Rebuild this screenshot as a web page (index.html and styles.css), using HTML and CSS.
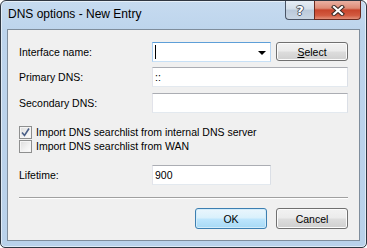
FILE: index.html
```html
<!DOCTYPE html>
<html lang="en">
<head>
    <meta charset="UTF-8">
    <title>DNS options - New Entry</title>
    <link rel="stylesheet" href="styles.css">
</head>
<body>
    <div class="window">
        <div class="titlebar">
            <span class="title">DNS options - New Entry</span>
            <div class="caption-buttons">
                <div class="cap-btn help">?</div>
                <div class="cap-btn close">
                    <svg width="14" height="11" viewBox="0 0 14 11">
                        <path d="M3 2 L11 9 M11 2 L3 9" stroke="#3a2a26" stroke-width="4.2" stroke-linecap="square"/>
                        <path d="M3 2 L11 9 M11 2 L3 9" stroke="#fff" stroke-width="2.2" stroke-linecap="square"/>
                    </svg>
                </div>
            </div>
        </div>

        <div class="client">
            <div class="row r1">
                <label class="label">Interface name:</label>
                <div class="combo focus">
                    <span class="caret"></span>
                    <span class="arrow"></span>
                </div>
                <button class="btn select"><u>S</u>elect</button>
            </div>
            <div class="row r2">
                <label class="label">Primary DNS:</label>
                <div class="input wide">::</div>
            </div>
            <div class="row r3">
                <label class="label">Secondary DNS:</label>
                <div class="input wide"></div>
            </div>

            <div class="check c1">
                <span class="box">
                    <svg width="9" height="9" viewBox="0 0 9 9">
                        <path d="M1 4.5 L3.5 7.5 L8 0.5" fill="none" stroke="#4a5f87" stroke-width="1.6"/>
                    </svg>
                </span>
                <span>Import DNS searchlist from internal DNS server</span>
            </div>
            <div class="check">
                <span class="box"></span>
                <span>Import DNS searchlist from WAN</span>
            </div>

            <div class="row r4">
                <label class="label">Lifetime:</label>
                <div class="input short">900</div>
            </div>

            <div class="separator"></div>

            <div class="buttons">
                <button class="btn default">OK</button>
                <button class="btn">Cancel</button>
            </div>
        </div>
    </div>
</body>
</html>
```

FILE: styles.css
```css
html, body { margin: 0; padding: 0; background: #fff; }
body { width: 367px; height: 248px; font-family: "Liberation Sans", Arial, sans-serif; }

.window {
    box-sizing: border-box;
    width: 367px; height: 248px;
    border: 1px solid #2f3742;
    border-radius: 6px 6px 5px 5px;
    background: linear-gradient(to bottom, #c6dbf0 0px, #bdd4ec 30px, #b9d1ea 100%);
    box-shadow: inset 0 0 0 1px rgba(255, 255, 255, 0.55);
    display: flex; flex-direction: column;
}

.titlebar { height: 28px; display: flex; align-items: flex-start; }
.title { font-size: 12px; line-height: 15px; padding: 6px 0 0 7px; color: #000; }
.caption-buttons { margin-left: auto; margin-right: 5px; display: flex; }
.cap-btn {
    box-sizing: border-box; height: 19px;
    display: flex; align-items: center; justify-content: center;
    border: 1px solid #4a5566; border-top: none;
}
.help {
    width: 29px; border-right: none; border-radius: 0 0 0 4px;
    background: linear-gradient(to bottom, #e6edf5 0%, #d3dee9 45%, #bac9da 50%, #c9d6e4 100%);
    color: #fff; font-weight: bold; font-size: 13px; font-family: "DejaVu Sans", sans-serif;
    text-shadow: 1px 0 0 #4b5563, -1px 0 0 #4b5563, 0 1px 0 #4b5563, 0 -1px 0 #4b5563;
}
.close {
    width: 47px; border-color: #6b2a1f; border-radius: 0 0 4px 0;
    background: linear-gradient(to bottom, #eab1a3 0%, #de8b76 40%, #c8452c 50%, #d25a40 80%, #e2907a 100%);
}

.client {
    flex: 1;
    margin: 0 6px 6px 6px;
    border: 1px solid #7f8d9c;
    background: #f0f0f0;
    padding: 12px 11px 0 11px;
    font-size: 10.5px;
    color: #000;
}

.row { display: flex; align-items: center; height: 20px; }
.r2 { margin-top: 5px; }
.r3 { margin-top: 6px; }
.r4 { margin-top: 12px; }
.label { width: 133px; flex: none; }

.input, .combo {
    box-sizing: border-box; height: 20px; background: #fff;
    border: 1px solid; border-color: #abadb3 #dbdfe6 #e3e9ef #e2e3ea;
    padding: 0 2px; line-height: 18px; font-size: 10.5px;
}
.wide { width: 197px; }
.short { width: 119px; }

.combo { width: 119px; position: relative; }
.combo.focus { border-color: #5e9fd8 #b7d6f3 #c7e0f6 #a9cdef; }
.caret { position: absolute; left: 2px; top: 2px; width: 1px; height: 14px; background: #000; }
.arrow {
    position: absolute; right: 4px; top: 8px;
    border-left: 4px solid transparent; border-right: 4px solid transparent; border-top: 4px solid #000;
}

.btn {
    box-sizing: border-box; font-family: inherit; font-size: 10.5px; color: #000;
    border: 1px solid #707070; border-radius: 3px; padding: 0;
    background: linear-gradient(to bottom, #f2f2f2 0%, #ebebeb 48%, #dddddd 52%, #cfcfcf 100%);
    box-shadow: inset 0 0 0 1px #fbfbfb;
}
.select { width: 72px; height: 19px; margin-left: 5px; align-self: flex-start; }
.btn.default {
    border-color: #3c7fb1;
    background: linear-gradient(to bottom, #eaf6fd 0%, #d9f0fc 48%, #bee6fd 52%, #a7d9f5 100%);
    box-shadow: inset 0 0 0 1px #d3ecfa;
}

.check { display: flex; align-items: center; height: 14px; }
.c1 { margin-top: 12px; }
.box {
    box-sizing: border-box; width: 13px; height: 13px; margin-right: 4px;
    border: 1px solid #8e8f8f;
    background: linear-gradient(135deg, #dcdcdc 0%, #f2f2f2 60%, #fdfdfd 100%);
    box-shadow: inset 0 0 0 1px #f4f4f4;
    display: flex; align-items: center; justify-content: center;
}

.separator { margin-top: 12px; height: 1px; background: #a0a0a0; border-bottom: 1px solid #fff; }

.buttons { display: flex; justify-content: flex-end; gap: 9px; margin-top: 9px; }
.buttons .btn { width: 72px; height: 21px; }
```
